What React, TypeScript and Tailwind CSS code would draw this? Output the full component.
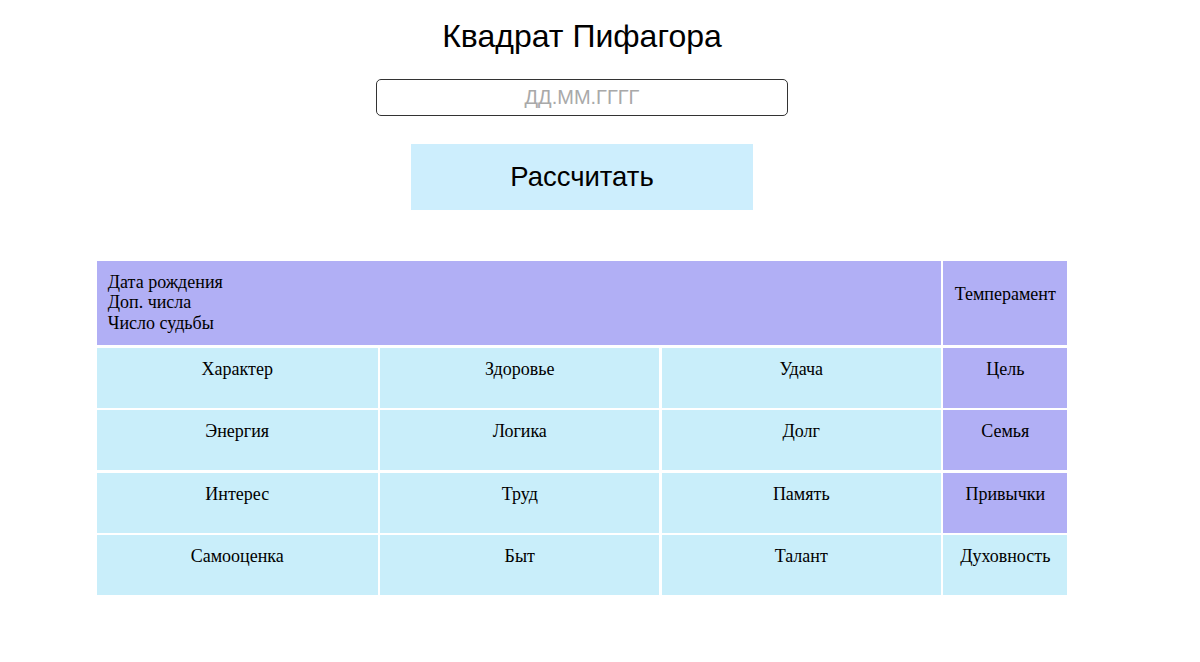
const rows: string[][] = [
  ["Характер", "Здоровье", "Удача", "Цель"],
  ["Энергия", "Логика", "Долг", "Семья"],
  ["Интерес", "Труд", "Память", "Привычки"],
  ["Самооценка", "Быт", "Талант", "Духовность"],
];

// last column of the last row is blue, the rest of the column is purple
function cellColor(row: number, col: number) {
  if (col === 3 && row < 3) return "bg-[#b1aff5]";
  return "bg-[#c9eefa]";
}

export default function App() {
  return (
    <div className="w-[1164px] flex flex-col items-center pt-[18px] font-['Liberation_Sans',Arial,sans-serif] text-black">
      <h1 className="text-[32px] leading-[36px] font-normal">Квадрат Пифагора</h1>

      <input
        type="text"
        placeholder="ДД.ММ.ГГГГ"
        className="mt-[25px] h-[37px] w-[412px] rounded-[5px] border border-[#333] bg-white text-center text-[20px] outline-none placeholder:text-[#a9a9a9]"
      />

      <button className="mt-[28px] h-[66px] w-[342px] bg-[#cdeefd] text-[27.5px] text-black">Рассчитать</button>

      <div className="mt-[50.5px] grid grid-cols-[281px_279px_279px_124px] grid-rows-[84.5px_60px_60px_60px_60px] gap-[2.5px] font-['Liberation_Serif','Times_New_Roman',serif] text-[18px] leading-[20.7px]">
        <div className="col-span-3 bg-[#b1aff5] pl-[11px] pt-[11px]">
          <div>Дата рождения</div>
          <div>Доп. числа</div>
          <div>Число судьбы</div>
        </div>
        <div className="bg-[#b1aff5] pt-[23px] text-center">Темперамент</div>

        {rows.map((row, r) =>
          row.map((name, c) => (
            <div key={name} className={`${cellColor(r, c)} pt-[11px] text-center`}>
              {name}
            </div>
          ))
        )}
      </div>
    </div>
  );
}
